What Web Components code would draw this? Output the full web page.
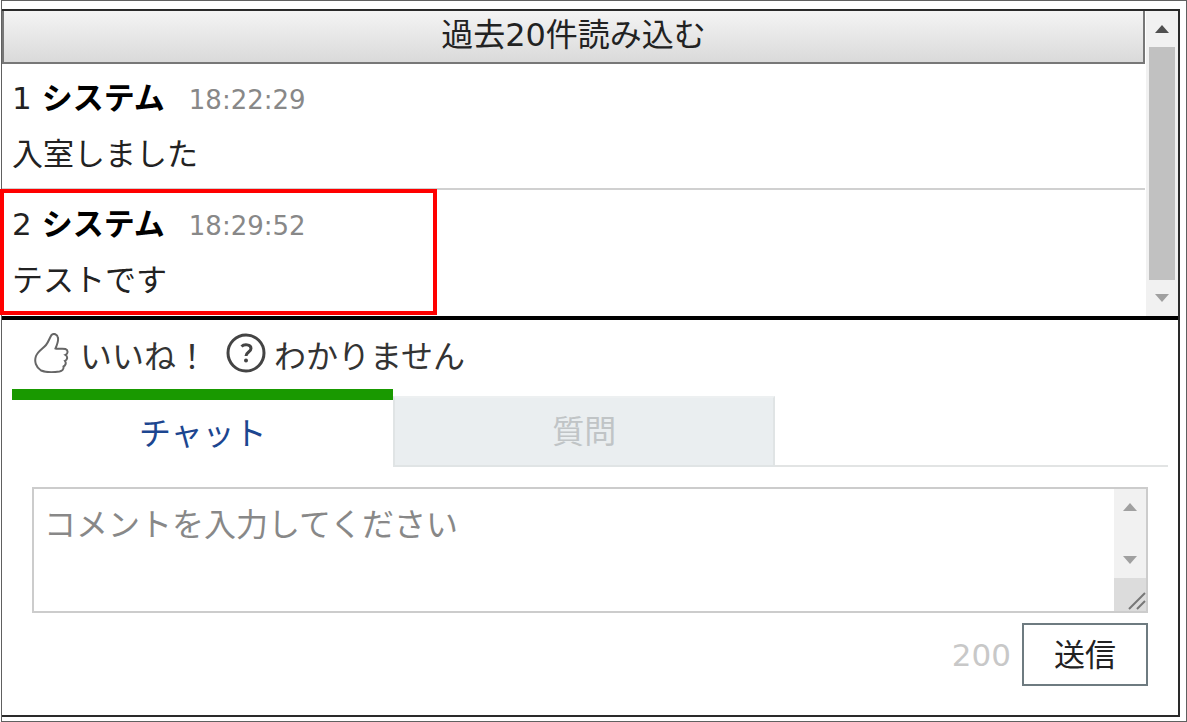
<!DOCTYPE html>
<html lang="ja">
<head>
<meta charset="utf-8">
<title>チャット</title>
<style>
  html, body { margin: 0; height: 100%; }
  body {
    background: #fff;
    color: #222;
    font-family: "DejaVu Sans", "Noto Sans CJK JP", sans-serif;
    font-size: 31px;
    line-height: 56px;
  }
</style>
</head>
<body>
<chat-app></chat-app>
<script>
const define = (name, html) => {
  const template = document.createElement('template');
  template.innerHTML = `<style>*{box-sizing:border-box}</style>${html}`;
  customElements.define(name, class extends HTMLElement {
    constructor() {
      super();
      this.attachShadow({ mode: 'open' }).append(template.content.cloneNode(true));
    }
  });
};

/* Vertical scroll track with arrows, optional thumb and resize grip */
define('scroll-track', `
<style>
  :host { display: flex; flex-direction: column; align-items: center; flex: none; width: 32px; background: #f1f1f1; }
  .arrow { display: block; flex: none; width: 32px; height: 36px; fill: #a0a0a0; }
  .thumb { display: none; width: 26px; flex: 1; background: #c1c1c1; }
  .space { flex: 1; }
  .grip { display: none; width: 32px; height: 33px; background: #dcdcdc; }
  :host([thumb]) .thumb { display: block; }
  :host([thumb]) .space { display: none; }
  :host([thumb]) .up { fill: #505050; }
  :host([grip]) .grip { display: block; flex: none; }
</style>
<svg class="arrow up" viewBox="0 0 32 36"><path d="M9 22 16 14 23 22Z"/></svg>
<div class="thumb"></div><div class="space"></div>
<svg class="arrow" viewBox="0 0 32 36"><path d="M9 14 16 22 23 14Z"/></svg>
<svg class="grip" viewBox="0 0 32 33"><path d="M15 31 31 15M23 31 31 23" stroke="#777" stroke-width="2" fill="none"/></svg>
`);

define('load-more', `
<style>
  :host { display: block; }
  button {
    display: block; width: 100%; height: 53px; padding: 0 0 4px; margin: 0;
    border: 2px solid #777; border-top: 0; border-radius: 0;
    background: linear-gradient(#f4f4f4, #dadada);
    font: inherit; font-size: 32px; line-height: 46px; color: #222;
  }
</style>
<button type="button"><slot></slot></button>
`);

define('chat-message', `
<style>
  :host { display: block; position: relative; padding: 6px 10px; border-bottom: 2px solid #d0d0d0; }
  :host(:last-of-type) { border-color: transparent; }
  header { display: flex; align-items: baseline; gap: 10px; height: 56px; }
  b { color: #000; font-weight: 700; }
  time { margin-left: 14px; font-size: 26px; color: #888; }
  p { margin: 0; height: 56px; }
  :host([marked])::after {
    content: ""; position: absolute; left: -2px; top: -1px; bottom: -1px; width: 437px;
    box-sizing: border-box; border: 4px solid #f00; pointer-events: none;
  }
</style>
<header><span><slot name="no"></slot></span><b><slot name="name"></slot></b><time><slot name="time"></slot></time></header>
<p><slot></slot></p>
`);

define('message-list', `
<style>
  :host { display: flex; border-bottom: 4px solid #000; }
  .items { flex: 1; min-width: 0; }
  scroll-track { margin-left: 1px; }
</style>
<div class="items"><slot></slot></div>
<scroll-track thumb></scroll-track>
`);

define('reaction-bar', `
<style>
  :host { display: flex; gap: 18px; padding: 6px 30px 1px; }
  button {
    display: flex; align-items: center; gap: 8px; height: 62px; padding: 0; border: 0;
    background: none; font: inherit; font-size: 32px; line-height: 62px; color: #333;
  }
  svg { display: block; width: 40px; height: 40px; fill: none; stroke: #444; margin-bottom: 8px; }
</style>
<button type="button">
  <svg viewBox="0 0 40 40"><path d="M19.500 2C21.500 0 25.500 1 26 5C26.500 8 25 12 23.500 15.500C26 16.500 30 15 33.500 16C36.500 17 36 21 33.500 22C36 23.500 35.500 27 33 28C34.500 30 33.500 32.500 31.500 33.500C32 36 30 38 27.500 38.500C21 39.500 14 39.500 9 37.500C4 34.500 2 28.500 4 23C6 18 11 15.500 14 12C16.500 9 17.500 5 19.500 2Z" stroke="#666" stroke-width="2"/></svg>
  <span>いいね！</span>
</button>
<button type="button">
  <svg viewBox="0 0 40 40"><circle cx="20" cy="20" r="18" stroke-width="3"/><path d="M15.500 13.500C18 11 25 11 25 15.500C25 19 20 19 20 23" stroke-width="3"/><circle cx="20" cy="27.500" r="2" fill="#444" stroke="none"/></svg>
  <span>わかりません</span>
</button>
`);

define('mode-tabs', `
<style>
  :host { display: flex; height: 78px; margin: 0 10px; background: linear-gradient(#e2e4e4, #e2e4e4) bottom / 100% 2px no-repeat; }
  button { width: 33%; padding: 0; border: 0; font: inherit; font-size: 32px; line-height: 64px; }
  .on { border-top: 11px solid #199900; background: #fff; color: #1c4690; }
  .off { margin-top: 7px; border: 2px solid #e0e4e5; border-top-color: #edf0f1; background: #eaeef0; color: #c0c4c6; }
</style>
<button type="button" class="on">チャット</button>
<button type="button" class="off">質問</button>
`);

define('comment-form', `
<style>
  :host { display: block; padding: 20px 30px 28px; }
  .box { display: flex; height: 126px; border: 2px solid #ccc; }
  textarea {
    flex: 1; min-width: 0; padding: 8px 10px; margin: 0; border: 0; outline: 0; resize: none; overflow: hidden;
    background: #fff; font: inherit; font-size: 32px; line-height: 56px; color: #222;
  }
  textarea::placeholder { color: #888; opacity: 1; }
  .send { display: flex; justify-content: flex-end; align-items: center; gap: 11px; margin-top: 10px; }
  output { color: #c8c8c8; }
  button {
    width: 126px; height: 63px; padding: 0; border: 2px solid #6e7b80;
    background: #fff; font: inherit; line-height: 56px; color: #222;
  }
</style>
<div class="box">
  <textarea aria-label="コメント" placeholder="コメントを入力してください"></textarea>
  <scroll-track grip></scroll-track>
</div>
<div class="send"><output>200</output><button type="button">送信</button></div>
`);

define('chat-app', `
<style>
  :host { display: flex; box-sizing: border-box; min-height: 100vh; margin-left: 1px; padding: 8px 6px 4px 0; border: 1px solid #606060; }
  main { flex: 1; min-width: 0; border: 2px solid #2a2a2a; border-left: 0; }
</style>
<main>
  <message-list>
    <load-more>過去20件読み込む</load-more>
    <chat-message><span slot="no">1</span><span slot="name">システム</span><span slot="time">18:22:29</span>入室しました</chat-message>
    <chat-message marked><span slot="no">2</span><span slot="name">システム</span><span slot="time">18:29:52</span>テストです</chat-message>
  </message-list>
  <reaction-bar></reaction-bar>
  <mode-tabs></mode-tabs>
  <comment-form></comment-form>
</main>
`);
</script>
</body>
</html>
